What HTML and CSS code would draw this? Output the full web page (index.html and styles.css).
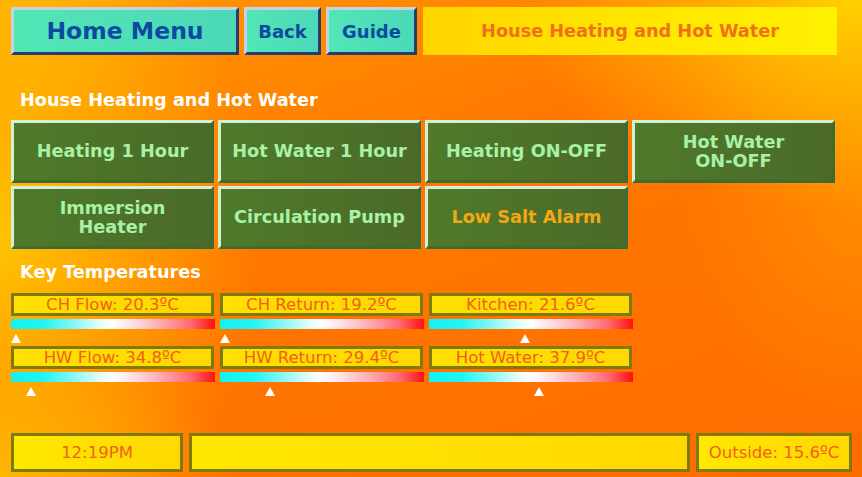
FILE: index.html
```html
<!DOCTYPE html>
<html>
<head>
<meta charset="utf-8">
<link rel="stylesheet" href="styles.css">
</head>
<body>
<div class="screen">
  <div class="topbar">
    <div class="nav-btn home">Home Menu</div>
    <div class="nav-btn back">Back</div>
    <div class="nav-btn guide">Guide</div>
    <div class="title-box">House Heating and Hot Water</div>
  </div>

  <div class="section-title first">House Heating and Hot Water</div>
  <div class="btn-grid">
    <div class="gbtn">Heating 1 Hour</div>
    <div class="gbtn">Hot Water 1 Hour</div>
    <div class="gbtn">Heating ON-OFF</div>
    <div class="gbtn">Hot Water<br>ON-OFF</div>
    <div class="gbtn">Immersion<br>Heater</div>
    <div class="gbtn">Circulation Pump</div>
    <div class="gbtn alarm">Low Salt Alarm</div>
  </div>

  <div class="section-title second">Key Temperatures</div>
  <div class="temp-grid">
    <div class="gauge">
      <div class="temp-box">CH Flow: 20.3ºC</div>
      <div class="bar"></div>
      <div class="marker-row"><span class="marker" style="left:5px"></span></div>
    </div>
    <div class="gauge">
      <div class="temp-box">CH Return: 19.2ºC</div>
      <div class="bar"></div>
      <div class="marker-row"><span class="marker" style="left:5px"></span></div>
    </div>
    <div class="gauge">
      <div class="temp-box">Kitchen: 21.6ºC</div>
      <div class="bar"></div>
      <div class="marker-row"><span class="marker" style="left:96px"></span></div>
    </div>
    <div class="gauge">
      <div class="temp-box">HW Flow: 34.8ºC</div>
      <div class="bar"></div>
      <div class="marker-row"><span class="marker" style="left:20px"></span></div>
    </div>
    <div class="gauge">
      <div class="temp-box">HW Return: 29.4ºC</div>
      <div class="bar"></div>
      <div class="marker-row"><span class="marker" style="left:50px"></span></div>
    </div>
    <div class="gauge">
      <div class="temp-box">Hot Water: 37.9ºC</div>
      <div class="bar"></div>
      <div class="marker-row"><span class="marker" style="left:110px"></span></div>
    </div>
  </div>

  <div class="spacer"></div>

  <div class="bottombar">
    <div class="status clock">12:19PM</div>
    <div class="status message"></div>
    <div class="status outside">Outside: 15.6ºC</div>
  </div>
</div>
</body>
</html>
```

FILE: styles.css
```css
html, body {
  margin: 0;
  padding: 0;
  width: 862px;
  height: 477px;
  overflow: hidden;
}

body {
  font-family: "DejaVu Sans", Verdana, sans-serif;
  background:
    radial-gradient(ellipse 260px 340px at 0% 50%, rgba(255, 198, 0, 0.95), rgba(255, 198, 0, 0) 100%),
    radial-gradient(ellipse 340px 210px at 100% 0%, rgba(255, 214, 0, 0.95), rgba(255, 214, 0, 0) 100%),
    radial-gradient(ellipse 180px 240px at 100% 40%, rgba(255, 170, 0, 0.45), rgba(255, 170, 0, 0) 100%),
    radial-gradient(ellipse 240px 120px at 0% 100%, rgba(255, 184, 0, 0.9), rgba(255, 184, 0, 0) 100%),
    radial-gradient(ellipse 200px 120px at 0% 0%, rgba(255, 176, 0, 0.9), rgba(255, 176, 0, 0) 100%),
    linear-gradient(160deg, #ff9a00 0%, #ff7800 40%, #ff6c00 100%);
}

.screen {
  box-sizing: border-box;
  width: 862px;
  height: 477px;
  padding: 7px 10px 5px 11px;
  display: flex;
  flex-direction: column;
}

/* top navigation */
.topbar {
  display: flex;
  height: 48px;
  gap: 5px;
}

.nav-btn {
  box-sizing: border-box;
  height: 48px;
  display: flex;
  align-items: center;
  justify-content: center;
  font-weight: bold;
  color: #0b4aa0;
  background: linear-gradient(90deg, #52e6b6 0%, #4cd8b8 100%);
  border-top: 3px solid #c6d2e2;
  border-left: 3px solid #c6d2e2;
  border-bottom: 3px solid #283a70;
  border-right: 3px solid #283a70;
}

.home {
  width: 228px;
  font-size: 23.5px;
}

.back {
  width: 77px;
  font-size: 18px;
}

.guide {
  width: 91px;
  font-size: 18px;
}

.title-box {
  margin-left: 1px;
  width: 414px;
  height: 48px;
  display: flex;
  align-items: center;
  justify-content: center;
  font-weight: bold;
  font-size: 17.7px;
  color: #f0701a;
  background: linear-gradient(90deg, #ffd400 0%, #ffe600 50%, #fff000 100%);
}

/* section headings */
.section-title {
  color: #ffffff;
  font-weight: bold;
  font-size: 17.7px;
  padding-left: 9px;
  line-height: 22px;
}

.section-title.first {
  margin-top: 34px;
  margin-bottom: 9px;
}

.section-title.second {
  margin-top: 12px;
  margin-bottom: 10px;
}

/* green buttons */
.btn-grid {
  display: grid;
  grid-template-columns: repeat(4, 203px);
  grid-auto-rows: 63px;
  column-gap: 4px;
  row-gap: 3px;
}

.gbtn {
  box-sizing: border-box;
  display: flex;
  align-items: center;
  justify-content: center;
  text-align: center;
  font-weight: bold;
  font-size: 17.7px;
  line-height: 19px;
  color: #a8f2a8;
  background: linear-gradient(90deg, #4f7a2a 0%, #4b6a28 100%);
  border-top: 3px solid #d4f0d4;
  border-left: 3px solid #d4f0d4;
  border-bottom: 3px solid #3e6a34;
  border-right: 3px solid #3e6a34;
}

.gbtn.alarm {
  color: #f2a810;
}

/* temperature gauges */
.temp-grid {
  display: grid;
  grid-template-columns: repeat(3, 204px);
  column-gap: 5px;
  row-gap: 0;
}

.temp-box {
  box-sizing: border-box;
  width: 203px;
  height: 23px;
  border: 3px solid #7f7a10;
  background: linear-gradient(90deg, #ffe000 0%, #ffd800 100%);
  color: #f0601a;
  font-size: 16.5px;
  line-height: 18px;
  text-align: center;
  white-space: nowrap;
}

.bar {
  margin-top: 3px;
  width: 204px;
  height: 10px;
  background: linear-gradient(90deg,
    #12f2f2 0%, #22f4f4 16%, #8ff8f8 32%, #dffcfc 43%, #ffffff 50%,
    #ffdfe4 60%, #ffa8b0 74%, #ff6a70 88%, #ff1010 100%);
}

.marker-row {
  position: relative;
  height: 17px;
}

.marker {
  position: absolute;
  top: 5px;
  margin-left: -5px;
  width: 0;
  height: 0;
  border-left: 5px solid transparent;
  border-right: 5px solid transparent;
  border-bottom: 9px solid #ffffff;
}

.spacer {
  flex: 1;
}

/* bottom status bar */
.bottombar {
  display: flex;
  gap: 6px;
  height: 39px;
}

.status {
  box-sizing: border-box;
  height: 39px;
  border: 3px solid #7f7a10;
  background: linear-gradient(90deg, #ffe800 0%, #ffd800 100%);
  color: #f0601a;
  font-size: 16.5px;
  display: flex;
  align-items: center;
  justify-content: center;
}

.clock {
  width: 172px;
}

.message {
  width: 501px;
}

.outside {
  width: 156px;
  white-space: nowrap;
}
```
